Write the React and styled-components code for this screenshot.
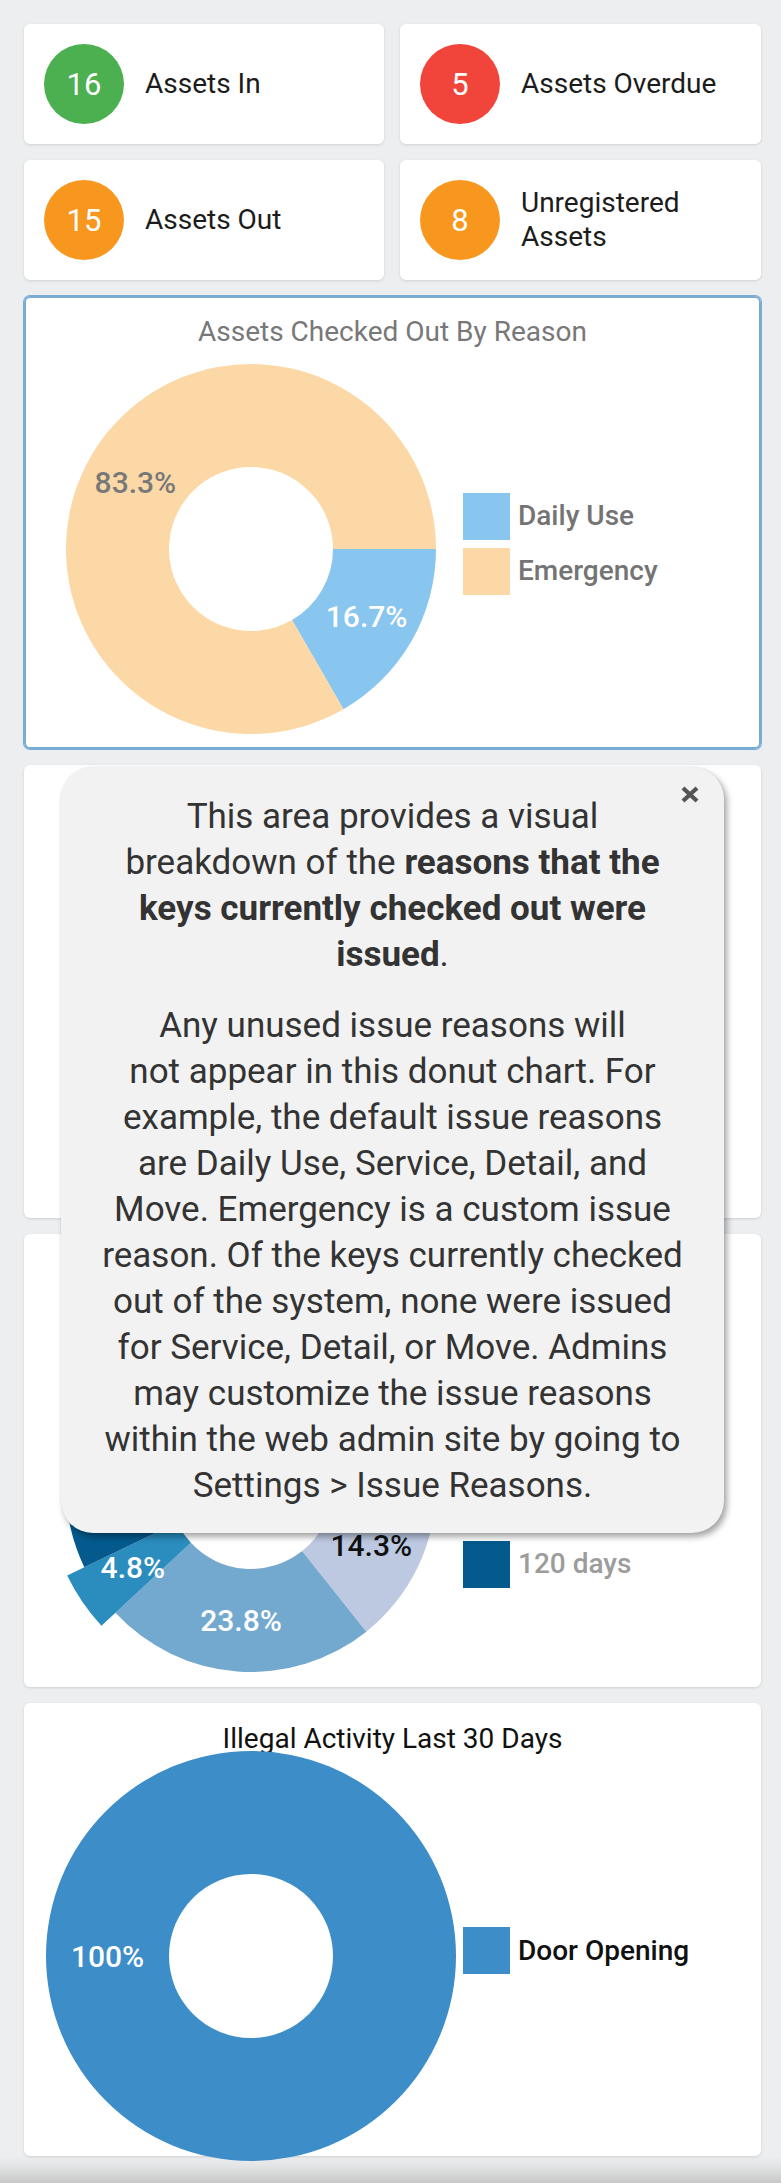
import styled, { createGlobalStyle } from "styled-components";

const GlobalStyle = createGlobalStyle`
  html, body {
    margin: 0;
    padding: 0;
    background: #edeef0;
  }
  body {
    font-family: Roboto, "Noto Sans", sans-serif;
  }
`;

const stats = [
  { count: 16, label: "Assets In", color: "#4caf50" },
  { count: 5, label: "Assets Overdue", color: "#f1453b" },
  { count: 15, label: "Assets Out", color: "#f7971e" },
  { count: 8, label: "Unregistered Assets", color: "#f7971e" },
];

const charts = [
  {
    title: "Assets Checked Out By Reason",
    titleColor: "#787878",
    legendColor: "#747474",
    active: true,
    r0: 82,
    r1: 185,
    slices: [
      { label: "Daily Use", value: 1, color: "#88c5ef", text: "#ffffff" },
      { label: "Emergency", value: 5, color: "#fdd8a7", text: "#787878" },
    ],
  },
  {
    title: "Assets Checked Out By User",
    titleColor: "#787878",
    legendColor: "#747474",
    r0: 82,
    r1: 185,
    slices: [
      { label: "Admin", value: 4, color: "#88c5ef", text: "#ffffff" },
      { label: "Service", value: 2, color: "#fdd8a7", text: "#787878" },
    ],
  },
  {
    title: "Assets Checked Out By Duration",
    titleColor: "#787878",
    legendColor: "#9c9c9c",
    r0: 82,
    r1: 185,
    slices: [
      { label: "30 days", value: 3, color: "#bdc9e1", text: "#111111" },
      { label: "60 days", value: 5, color: "#74a9cf", text: "#ffffff" },
      { label: "90 days", value: 1, color: "#2b8cbe", text: "#ffffff", grow: 19 },
      { label: "120 days", value: 12, color: "#045a8d", text: "#ffffff" },
    ],
  },
  {
    title: "Illegal Activity Last 30 Days",
    titleColor: "#111111",
    legendColor: "#111111",
    r0: 82,
    r1: 205,
    slices: [{ label: "Door Opening", value: 7, color: "#3d8dc9", text: "#ffffff" }],
  },
];

const CX = 227;
const CY = 199;

const polar = (r, a) => [r * Math.cos((a * Math.PI) / 180), r * Math.sin((a * Math.PI) / 180)];

const slicePath = (r0, r1, a0, a1) => {
  if (a1 - a0 >= 359.99) {
    return `M${-r1} 0 A${r1} ${r1} 0 1 1 ${r1} 0 A${r1} ${r1} 0 1 1 ${-r1} 0 Z M${-r0} 0 A${r0} ${r0} 0 1 0 ${r0} 0 A${r0} ${r0} 0 1 0 ${-r0} 0 Z`;
  }
  const large = a1 - a0 > 180 ? 1 : 0;
  const [x0, y0] = polar(r1, a0);
  const [x1, y1] = polar(r1, a1);
  const [x2, y2] = polar(r0, a1);
  const [x3, y3] = polar(r0, a0);
  return `M${x0} ${y0} A${r1} ${r1} 0 ${large} 1 ${x1} ${y1} L${x2} ${y2} A${r0} ${r0} 0 ${large} 0 ${x3} ${y3} Z`;
};

const Page = styled.div`
  width: 781px;
  min-height: 2183px;
  display: flex;
  flex-direction: column;
`;

const Content = styled.div`
  position: relative;
  z-index: 1;
  padding: 24px 20px 0 24px;
  display: flex;
  flex-direction: column;
  gap: 16px;
`;

const StatGrid = styled.div`
  display: grid;
  grid-template-columns: 360px 361px;
  grid-auto-rows: 120px;
  gap: 16px;
`;

const StatCard = styled.div`
  display: flex;
  align-items: center;
  padding-left: 20px;
  background: #ffffff;
  border-radius: 6px;
  box-shadow: 0 1px 3px rgba(0, 0, 0, 0.13);
`;

const Badge = styled.div`
  flex-shrink: 0;
  width: 80px;
  height: 80px;
  border-radius: 50%;
  background: ${(p) => p.$color};
  color: #ffffff;
  font-size: 31px;
  display: flex;
  align-items: center;
  justify-content: center;
`;

const StatLabel = styled.div`
  margin-left: 21px;
  padding-right: 16px;
  font-size: 28px;
  line-height: 34px;
  color: #1c1c1c;
`;

const ChartCard = styled.section`
  position: relative;
  height: 453px;
  background: #ffffff;
  border-radius: 6px;
  box-shadow: ${(p) =>
    p.$active
      ? "0 0 0 1px #78acd4, inset 0 0 0 2px #78acd4"
      : "0 1px 3px rgba(0, 0, 0, 0.13)"};
`;

const ChartTitle = styled.h2`
  margin: 0;
  padding-top: 18px;
  font-size: 28px;
  line-height: 36px;
  font-weight: 400;
  text-align: center;
  color: ${(p) => p.$color};
`;

const ChartBody = styled.div`
  display: flex;
  align-items: center;
  height: 387px;
`;

const DonutSvg = styled.svg`
  flex-shrink: 0;
  overflow: visible;
  text {
    font-family: Roboto, sans-serif;
    font-size: 30px;
    font-weight: 500;
  }
`;

const Legend = styled.ul`
  list-style: none;
  margin: 0;
  padding: 0;
  display: flex;
  flex-direction: column;
  gap: 8px;
`;

const LegendItem = styled.li`
  display: flex;
  align-items: center;
  font-size: 28px;
  line-height: 1;
  font-weight: 500;
  color: ${(p) => p.$color};
`;

const Swatch = styled.span`
  width: 47px;
  height: 47px;
  margin-right: 8px;
  background: ${(p) => p.$color};
`;

const Tooltip = styled.div`
  position: absolute;
  top: 767px;
  left: 61px;
  z-index: 2;
  width: 663px;
  box-sizing: border-box;
  padding: 27px 20px 24px;
  background: #f2f2f2;
  border-radius: 32px;
  box-shadow: 3px 4px 6px rgba(0, 0, 0, 0.35), 0 0 2px rgba(0, 0, 0, 0.08);
  font-size: 35px;
  line-height: 46px;
  color: #333333;
  text-align: center;
  p {
    margin: 0;
  }
  p + p {
    margin-top: 25px;
  }
  b {
    font-weight: 700;
  }
`;

const CloseButton = styled.button`
  position: absolute;
  top: 16px;
  right: 22px;
  width: 24px;
  height: 22px;
  padding: 0;
  border: 0;
  background: transparent;
  display: flex;
  align-items: center;
  justify-content: center;
`;

const BottomShade = styled.div`
  margin-top: auto;
  height: 27px;
  background: linear-gradient(to bottom, #edeef0 0%, #e4e5e6 35%, #c8c8c8 100%);
`;

const Donut = ({ slices, r0, r1 }) => {
  const total = slices.reduce((s, d) => s + d.value, 0);
  let angle = 0;
  const parts = slices.map((d) => {
    const a0 = angle;
    const a1 = angle + (d.value / total) * 360;
    angle = a1;
    const outer = r1 + (d.grow || 0);
    const mid = (a0 + a1) / 2;
    const [lx, ly] = polar((r0 + outer) / 2, mid);
    const pct = Math.round((d.value / total) * 1000) / 10;
    return { ...d, a0, a1, outer, lx, ly, pct };
  });

  return (
    <DonutSvg width="439" height="387">
      <g transform={`translate(${CX} ${CY})`}>
        {parts.map((p) => (
          <path key={p.label} d={slicePath(r0, p.outer, p.a0, p.a1)} fill={p.color} fillRule="evenodd" />
        ))}
        {parts.map((p) => (
          <text key={p.label} x={p.lx} y={p.ly} dy="0.36em" textAnchor="middle" fill={p.text}>
            {p.pct}%
          </text>
        ))}
      </g>
    </DonutSvg>
  );
};

const ChartPanel = ({ chart }) => (
  <ChartCard $active={chart.active}>
    <ChartTitle $color={chart.titleColor}>{chart.title}</ChartTitle>
    <ChartBody>
      <Donut slices={chart.slices} r0={chart.r0} r1={chart.r1} />
      <Legend>
        {chart.slices.map((s) => (
          <LegendItem key={s.label} $color={chart.legendColor}>
            <Swatch $color={s.color} />
            {s.label}
          </LegendItem>
        ))}
      </Legend>
    </ChartBody>
  </ChartCard>
);

const App = () => (
  <>
    <GlobalStyle />
    <Page>
      <Content>
        <StatGrid>
          {stats.map((s) => (
            <StatCard key={s.label}>
              <Badge $color={s.color}>{s.count}</Badge>
              <StatLabel>{s.label}</StatLabel>
            </StatCard>
          ))}
        </StatGrid>

        {charts.map((c) => (
          <ChartPanel key={c.title} chart={c} />
        ))}

        <Tooltip>
          <CloseButton aria-label="Close">
            <svg width="20" height="19" viewBox="0 0 20 19">
              <path d="M3 3 L17 16 M17 3 L3 16" stroke="#555555" strokeWidth="4.2" strokeLinecap="butt" />
            </svg>
          </CloseButton>
          <p>
            This area provides a visual
            <br />
            breakdown of the <b>reasons that the</b>
            <br />
            <b>keys currently checked out were</b>
            <br />
            <b>issued</b>.
          </p>
          <p>
            Any unused issue reasons will
            <br />
            not appear in this donut chart. For
            <br />
            example, the default issue reasons
            <br />
            are Daily Use, Service, Detail, and
            <br />
            Move. Emergency is a custom issue
            <br />
            reason. Of the keys currently checked
            <br />
            out of the system, none were issued
            <br />
            for Service, Detail, or Move. Admins
            <br />
            may customize the issue reasons
            <br />
            within the web admin site by going to
            <br />
            Settings &gt; Issue Reasons.
          </p>
        </Tooltip>
      </Content>
      <BottomShade />
    </Page>
  </>
);

export default App;
